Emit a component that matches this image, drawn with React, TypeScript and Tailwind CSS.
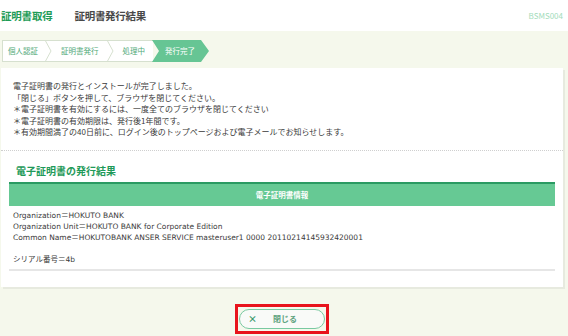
import React from 'react';

const steps = ['個人認証', '証明書発行', '処理中'];

const notices = [
  '電子証明書の発行とインストールが完了しました。',
  '「閉じる」ボタンを押して、ブラウザを閉じてください。',
  '＊電子証明書を有効にするには、一度全てのブラウザを閉じてください',
  '＊電子証明書の有効期限は、発行後1年間です。',
  '＊有効期間満了の40日前に、ログイン後のトップページおよび電子メールでお知らせします。',
];

const Chevron = () => (
  <svg width="7" height="22" viewBox="0 0 7 22" className="shrink-0">
    <polyline points="0,0 6,11 0,22" fill="none" stroke="#d6e0cf" strokeWidth="1" />
  </svg>
);

const App = () => {
  return (
    <div className="h-[336px] w-[568px] overflow-hidden bg-[#f5f8ec] font-['Noto_Sans_CJK_JP',sans-serif]">
      <header className="flex h-[31px] items-center bg-white pl-[1px] pr-[5px]">
        <span className="text-[10.5px] font-bold tracking-[-0.2px] text-[#1e9c57]">証明書取得</span>
        <span className="ml-[22px] text-[10.5px] font-bold tracking-[-0.3px] text-[#484848]">証明書発行結果</span>
        <span className="ml-auto text-[8px] text-[#a3dcbb]">BSMS004</span>
      </header>

      <nav className="ml-[2px] mt-[9px] flex h-[22px]">
        <div className="flex h-full items-stretch border-y border-l border-[#d6e0cf] bg-white">
          {steps.map((s, i) => (
            <div key={s} className="flex items-center">
              <span className={`text-[7.5px] text-[#4fa877] ${i === 0 ? 'pl-[5px] pr-[7px]' : 'pl-[9px] pr-[8px]'}`}>{s}</span>
              {i < steps.length - 1 && <Chevron />}
            </div>
          ))}
        </div>
        <div className="-ml-[1px] flex h-full w-[57px] items-center bg-[#66c594] pl-[13px] [clip-path:polygon(0_0,calc(100%-8px)_0,100%_50%,calc(100%-8px)_100%,0_100%,7px_50%)]">
          <span className="text-[7.5px] text-white">発行完了</span>
        </div>
      </nav>

      <section className="ml-[1px] mt-[6px] w-[562px] bg-white shadow-[2px_2px_0_#e7eadf]">
        <div className="px-[12px] pb-[12px] pt-[12px] text-[8px] leading-[11.5px] text-[#3a3a3a]">
          {notices.map((n) => (
            <div key={n}>{n}</div>
          ))}
        </div>
        <div className="border-t border-dotted border-[#cfcfcf]" />
        <h2 className="ml-[15px] mt-[13px] text-[10px] font-bold leading-[14px] text-[#1f9a59]">電子証明書の発行結果</h2>
        <div className="mx-[8px] mt-[4px]">
          <div className="flex h-[24px] items-center justify-center border-t-2 border-[#2a9a62] bg-[#66c994]">
            <span className="text-[7.5px] font-bold text-white">電子証明書情報</span>
          </div>
          <div className="px-[4px] pt-[4px] font-['DejaVu_Sans','Noto_Sans_CJK_JP',sans-serif] text-[7.5px] leading-[11px] text-[#3a3a3a]">
            <div>Organization＝HOKUTO BANK</div>
            <div>Organization Unit＝HOKUTO BANK for Corporate Edition</div>
            <div>Common Name＝HOKUTOBANK ANSER SERVICE masteruser1 0000 20110214145932420001</div>
            <div className="h-[11px]" />
            <div>シリアル番号＝4b</div>
          </div>
          <div className="mt-[4px] h-[2px] bg-[#e6e6e6]" />
        </div>
        <div className="h-[16px]" />
      </section>

      <div className="mt-[17px] flex justify-center pr-[4px]">
        <div className="border-[3px] border-[#e8141c] px-[1px] py-[2px]">
          <button className="relative flex h-[20px] w-[86px] items-center justify-center rounded-full border-[1.5px] border-[#79c9a1] bg-[#f9faf8]">
            <span className="absolute left-[8px] text-[9px] font-bold leading-none text-[#3c9b6b]">×</span>
            <span className="ml-[6px] text-[8px] font-bold text-[#5fa37f]">閉じる</span>
          </button>
        </div>
      </div>
    </div>
  );
};

export default App;
